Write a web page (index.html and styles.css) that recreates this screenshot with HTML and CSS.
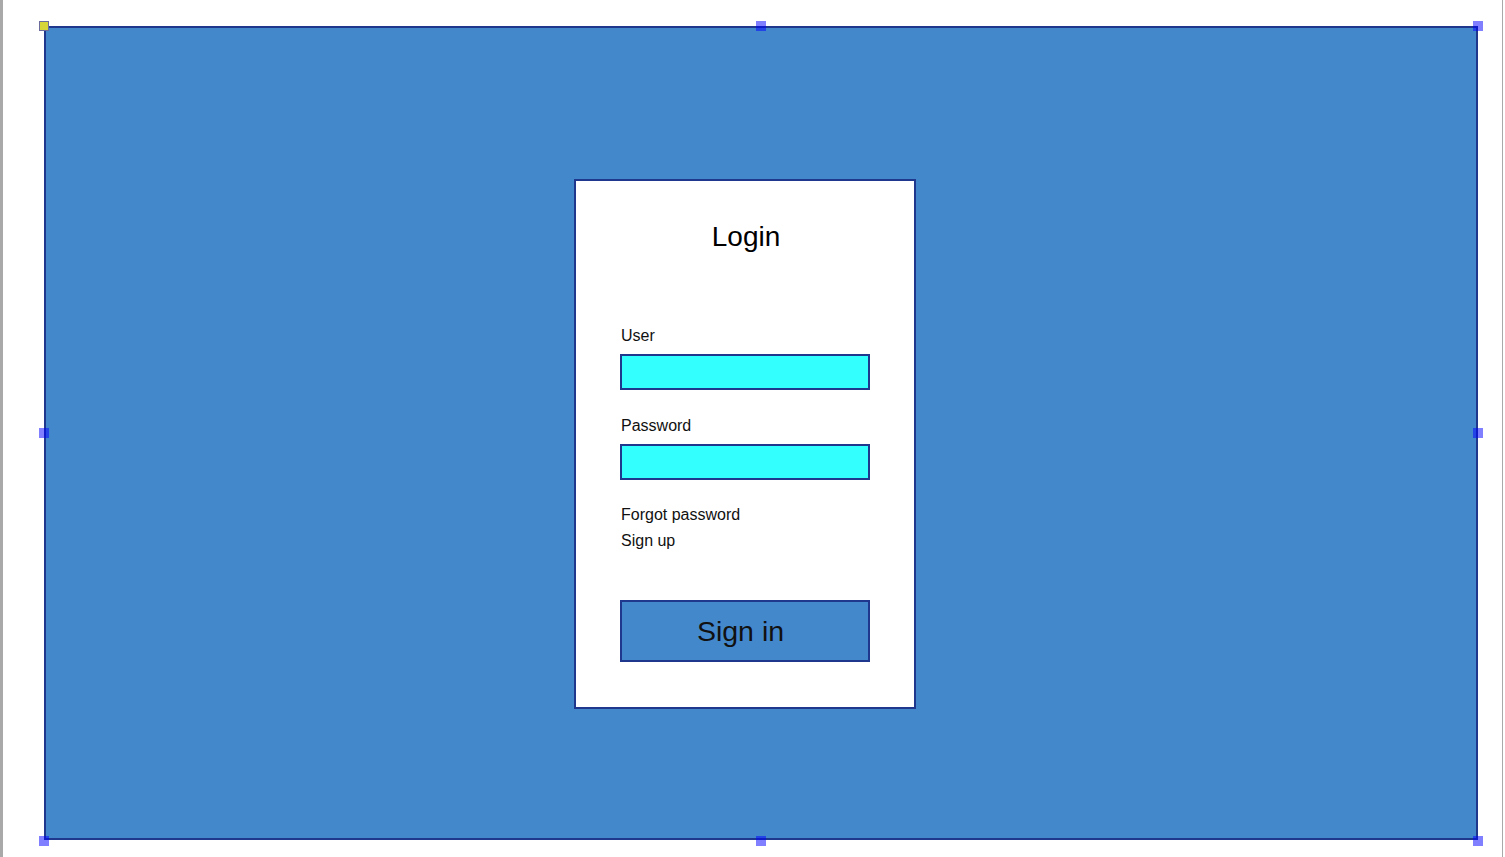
FILE: index.html
```html
<!DOCTYPE html>
<html>
<head>
<meta charset="utf-8">
<title>Login mockup</title>
<link rel="stylesheet" href="styles.css">
</head>
<body>
<div class="page">
  <div class="canvas">
    <span class="handle tl"></span>
    <span class="handle tm"></span>
    <span class="handle tr"></span>
    <span class="handle ml"></span>
    <span class="handle mr"></span>
    <span class="handle bl"></span>
    <span class="handle bm"></span>
    <span class="handle br"></span>
    <div class="card">
      <h1 class="title">Login</h1>
      <label class="label label-user">User</label>
      <div class="field"></div>
      <label class="label label-pass">Password</label>
      <div class="field"></div>
      <div class="links">
        <div class="link">Forgot password</div>
        <div class="link">Sign up</div>
      </div>
      <div class="btn">Sign in</div>
    </div>
  </div>
</div>
</body>
</html>
```
FILE: styles.css
```css
html, body {
  margin: 0;
  padding: 0;
  background: #ffffff;
}
body {
  font-family: "Liberation Sans", Arial, sans-serif;
  color: #111;
}
.page {
  box-sizing: border-box;
  width: 1503px;
  height: 857px;
  border-left: 3px solid #a9a9a9;
  border-right: 1px solid #a9a9a9;
  padding: 26px 0 0 41px;
  overflow: hidden;
}
.canvas {
  position: relative;
  box-sizing: border-box;
  width: 1434px;
  height: 814px;
  background: #4488cc;
  border: 2px solid #1f378c;
  padding: 151px 0 0 528px;
}
.handle {
  position: absolute;
  width: 10px;
  height: 10px;
  box-sizing: border-box;
  background: rgba(0, 0, 255, 0.5);
}
.handle.tl { left: -7px; top: -7px; background: #d6d63a; border: 1px solid rgba(0, 0, 255, 0.5); }
.handle.tm { left: calc(50% - 5px); top: -7px; }
.handle.tr { right: -7px; top: -7px; }
.handle.ml { left: -7px; top: calc(50% - 5px); }
.handle.mr { right: -7px; top: calc(50% - 5px); }
.handle.bl { left: -7px; bottom: -8px; }
.handle.bm { left: calc(50% - 5px); bottom: -8px; }
.handle.br { right: -7px; bottom: -8px; }

.card {
  box-sizing: border-box;
  width: 342px;
  height: 530px;
  background: #ffffff;
  border: 2px solid #1f378c;
  padding: 40px 0 0 44px;
  display: flex;
  flex-direction: column;
  align-items: flex-start;
}
.title {
  align-self: stretch;
  margin: 0 0 0 -42px;
  font-size: 28px;
  line-height: 32px;
  font-weight: normal;
  text-align: center;
  color: #000;
}
.label {
  display: block;
  padding-left: 1px;
  font-size: 16px;
  line-height: 18px;
  color: #111;
}
.label-user { margin-top: 74px; }
.label-pass { margin-top: 27px; }
.field {
  box-sizing: border-box;
  width: 250px;
  height: 36px;
  margin-top: 9px;
  background: #33ffff;
  border: 2px solid #1f378c;
}
.links {
  margin-top: 22px;
  padding-left: 1px;
  font-size: 16px;
  line-height: 26px;
  color: #111;
}
.btn {
  box-sizing: border-box;
  width: 250px;
  height: 62px;
  margin-top: 46px;
  background: #4488cc;
  border: 2px solid #1f378c;
  display: flex;
  align-items: center;
  justify-content: center;
  padding: 0 9px 0 0;
  font-size: 28.5px;
  color: #111;
}
```
